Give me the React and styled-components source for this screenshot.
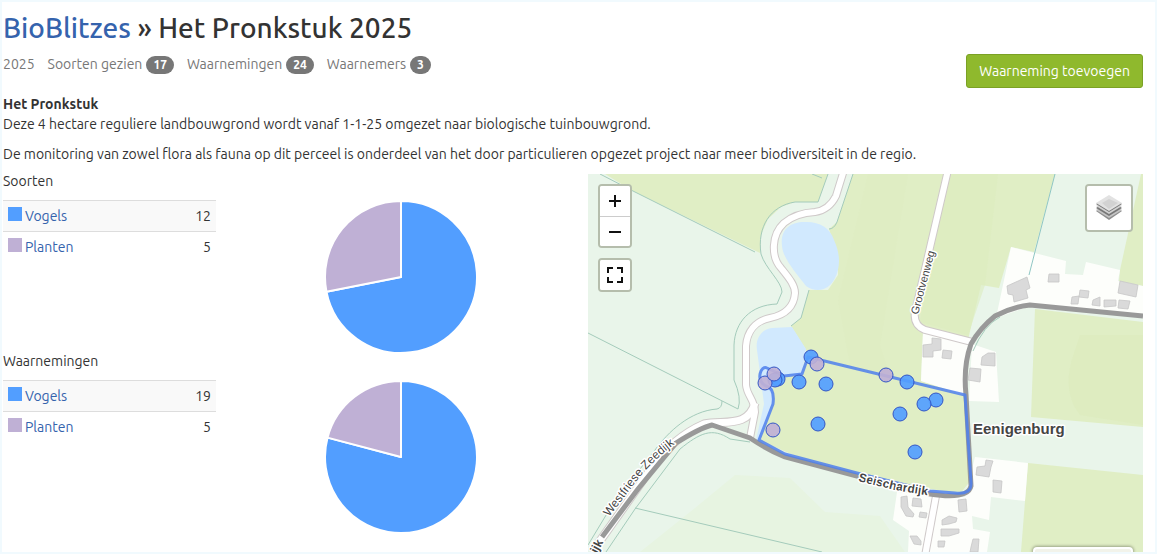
import React from "react";
import styled, { createGlobalStyle } from "styled-components";

const GlobalStyle = createGlobalStyle`
  *, *::before, *::after { box-sizing: border-box; }
  body {
    margin: 0;
    background: #f1fafe;
    color: #333;
    font-family: Ubuntu, "DejaVu Sans Condensed", sans-serif;
    font-size: 14px;
    line-height: 20px;
  }
`;

const Page = styled.main`
  margin: 2px;
  padding: 8px 12px 0 1px;
  background: #fff;
`;

const Title = styled.h1`
  margin: 0;
  padding-top: 2px;
  font-family: Ubuntu, "Noto Sans", sans-serif;
  font-size: 28px;
  font-weight: 500;
  line-height: 32px;
`;

const Link = styled.a`
  color: #3563ad;
  text-decoration: none;
  &:hover { text-decoration: underline; }
`;

const Bar = styled.div`
  display: flex;
  justify-content: space-between;
  align-items: flex-start;
  padding-top: 10px;
`;

const Stats = styled.ul`
  display: flex;
  gap: 13px;
  margin: 0;
  padding: 0;
  list-style: none;
  color: #777;
`;

const Badge = styled.span`
  display: inline-block;
  min-width: 10px;
  margin-left: 4px;
  padding: 3px 7px;
  border-radius: 10px;
  background: #777;
  color: #fff;
  font-size: 12px;
  font-weight: 700;
  line-height: 12px;
`;

const AddButton = styled.button`
  height: 34px;
  padding: 0 12px;
  border: 1px solid #7ba125;
  border-radius: 3px;
  background: #8fb92d;
  color: #fff;
  font: inherit;
  cursor: pointer;
`;

const Intro = styled.section`
  padding-top: 6px;
  p { margin: 0 0 10px; }
  p:last-child { margin: 0 0 7px; }
`;

const Columns = styled.div`
  display: grid;
  grid-template-columns: 1fr 1fr;
  gap: 30px;
  align-items: start;
`;

const Group = styled.section`
  display: grid;
  grid-template-columns: 213fr 314fr;
  gap: 28px;
  height: 180px;
`;

const GroupTitle = styled.h2`
  margin: 0 0 9px;
  font-size: 14px;
  font-weight: 400;
  line-height: 20px;
`;

const Table = styled.table`
  width: 100%;
  border-collapse: collapse;
  td {
    padding: 5px;
    height: 31px;
    border-top: 1px solid #ddd;
    vertical-align: top;
  }
  td:last-child { text-align: right; }
  tr:first-child { background: #f9f9f9; }
`;

const Swatch = styled.span`
  display: inline-block;
  width: 14px;
  height: 14px;
  margin-right: 3px;
  background: ${(p) => p.$color};
`;

const Pie = styled.svg`
  display: block;
  width: 156px;
  height: 156px;
  margin: 28px auto 0;
`;

const MapPanel = styled.section`
  position: relative;
  margin-top: 3px;
  overflow: hidden;
  font-family: "Liberation Sans", Arial, sans-serif;
`;

const MapDrawing = styled.svg`
  display: block;
  width: 100%;
  height: auto;
`;

const MapControls = styled.div`
  position: absolute;
  top: 10px;
  ${(p) => p.$side}: 10px;
  display: flex;
  flex-direction: column;
  gap: 10px;
`;

const ControlGroup = styled.div`
  border: 2px solid #b5bdac;
  border-radius: 4px;
  background: #fff;
  overflow: hidden;
`;

const MapButton = styled.button`
  display: flex;
  align-items: center;
  justify-content: center;
  width: ${(p) => p.$size}px;
  height: ${(p) => p.$size}px;
  padding: 0;
  border: 0;
  background: #fff;
  cursor: pointer;
  & + & { border-top: 1px solid #ccc; }
`;

const MapScale = styled.div`
  position: absolute;
  right: 10px;
  bottom: 0;
  width: 100px;
  height: 5px;
  border: 2px solid #fff;
  border-bottom: 0;
  border-radius: 4px 4px 0 0;
  background: #f2f3ea;
  box-shadow: 0 0 3px 1px #9aa385;
`;

const BLUE = "#529eff";
const PURPLE = "#bfb0d5";

const groups = [
  { title: "Soorten", split: 0.719, rows: [["Vogels", 12, BLUE], ["Planten", 5, PURPLE]] },
  { title: "Waarnemingen", split: 0.791, rows: [["Vogels", 19, BLUE], ["Planten", 5, PURPLE]] },
];

const stats = [["Soorten gezien", 17], ["Waarnemingen", 24], ["Waarnemers", 3]];

function PieChart({ split, label }) {
  const at = (t) => `${76 * Math.sin(2 * Math.PI * t)} ${-76 * Math.cos(2 * Math.PI * t)}`;
  const slices = [[0, split, BLUE], [split, 1, PURPLE]];
  return (
    <Pie viewBox="-78 -78 156 156" role="img" aria-label={label}>
      {slices.map(([from, to, color]) => (
        <path
          key={color}
          d={`M0 0L${at(from)}A76 76 0 ${to - from > 0.5 ? 1 : 0} 1 ${at(to)}Z`}
          fill={color}
          stroke="#fff"
          strokeWidth="2"
          strokeLinejoin="round"
        />
      ))}
    </Pie>
  );
}

const fields = [
  "M605 174L631 190L760 253L761 235L768 219L781 207L795 202L818 202L828 174Z",
  "M853 174L837 222L829 229L838 258L838 275L828 290L809 290L801 318L791 326L806 350L803 375L773 378L773 398L759 440L800 458L880 480L960 494L971 480L966 395L921 381L923 330L968 340L981 285L999 288L1011 247L1034 252L1055 174Z",
  "M1141 174L1120 270L1119 281L1143 286V174Z",
  "M1035 309L1143 322V427L1031 417Z",
  "M1028 463L1143 475V552H1021Z",
];

const plots = [
  "M1011 247L1066 261L1065 274L1083 275L1086 262L1120 270L1118 281L1143 286V318L1030 306L996 318Z",
  "M923 333L968 343L964 395L921 381Z",
  "M972 344L996 352L999 402L969 401Z",
  "M975 457L1028 463L1025 501L991 497L989 520L972 516L973 529L990 532L987 552H908L909 531L893 520L897 492L965 497Z",
];

const greenLines = [
  "M600 174L631 190L755 252",
  "M828 174L818 202H795C770 206 757 227 761 254C765 268 782 282 782 292L777 304C750 305 735 322 734 345",
  "M853 174L837 222Q834 229 829 229",
  "M809 290L801 318L791 326",
  "M588 333L738 409Q742 398 734 380V345",
  "M722 401Q722 408 717 409C690 411 668 432 655 450L614 502L588 545",
  "M606 552L635 509L680 449C700 433 712 427 730 439L750 442",
  "M635 508L822 552",
  "M812 174L822 178",
  "M973 351Q984 325 1000 317",
];

const buildings = [
  "M1007 286L1027 277L1030 288L1026 290L1028 298L1014 302L1013 295L1008 294Z",
  "M1049 274H1059V282H1048Z",
  "M1080 290L1089 291L1088 298L1079 297Z",
  "M1072 297L1079 296L1078 304H1071Z",
  "M1093 300L1100 297V306L1092 305Z",
  "M1104 300H1116V306L1104 307Z",
  "M1119 300L1130 301L1128 309L1118 308Z",
  "M1120 281L1138 285L1136 297L1118 293Z",
  "M923 345L932 344V338L941 339V350L933 351V357H923Z",
  "M943 350L952 351L951 359L942 358Z",
  "M982 357L988 353H995V366L981 365Z",
  "M970 368L981 369L980 382L968 380Z",
  "M977 467L985 466L986 460L993 461L991 467L989 477L976 475Z",
  "M993 480L1002 481L1001 493L993 492Z",
  "M958 500L966 499L967 511L959 512Z",
  "M901 497L907 496L908 507L914 514L913 517L906 516L901 507Z",
  "M913 498L921 499L922 507L912 506Z",
  "M920 512L927 513L926 518L919 517Z",
  "M942 520L949 516L957 518L956 522L949 524L942 525Z",
  "M941 529L959 529V533L949 536H941Z",
  "M910 536L917 536L921 541V545L914 544Z",
  "M938 541L945 541L944 547H938Z",
  "M973 539H979L978 552H970L971 547Z",
];

const mainRoad =
  "M602 537L638 489L676 443Q700 428 712 425L750 438Q768 450 785 457L857 476L930 494Q968 500 971 486L966 395Q963 366 971 344Q980 328 995 316Q1012 307 1030 305L1143 316";
const whiteRoads = [
  ["M844 170L836 196Q829 210 815 212Q796 213 784 223C771 235 771 257 781 268C789 278 795 285 795 293C794 307 785 315 770 318C755 321 747 332 746 346V385C747 396 755 400 755 412L750 438", 6],
  ["M592 552L612 524L650 470Q672 438 704 424C725 420 748 428 755 403", 7],
  ["M948 170L915 312Q913 325 925 330L972 342", 6],
  ["M936 496L925 556", 6],
];
const perimeter =
  "M808 357L965 395L971 482Q972 495 955 493L930 491L857 473L785 454L759 440L773 404Q775 388 766 386C755 380 761 365 767 368L784 376L802 374Z";

const sightings = [
  [811, 357, BLUE], [817, 364, PURPLE], [778, 379, BLUE], [775, 380, BLUE], [765, 383, PURPLE],
  [774, 374, PURPLE], [799, 382, BLUE], [826, 384, BLUE], [818, 424, BLUE], [773, 430, PURPLE],
  [886, 375, PURPLE], [907, 382, BLUE], [936, 400, BLUE], [924, 404, BLUE], [900, 414, BLUE], [915, 452, BLUE],
];

function MapArt() {
  const halo = { stroke: "#fff", strokeWidth: 3, strokeLinejoin: "round", paintOrder: "stroke", fill: "#444" };
  return (
    <MapDrawing viewBox="588 174 555 378" role="img" aria-label="Kaart van Het Pronkstuk">
      <defs>
        <path id="dike" d="M609 517L629 491Q650 460 690 433" />
        <path id="street" d="M858 481L895 490L950 499" />
      </defs>
      <rect x="588" y="174" width="555" height="378" fill="#e9f5ea" />
      <path d="M640 552L695 508L735 475L790 478L825 512L880 516L905 552Z" fill="#e7f4e1" />
      {fields.map((d) => <path key={d} d={d} fill="#e0eec5" />)}
      <path d="M868 174H908L880 345L890 375L850 365L838 300Z" fill="#ddecc0" opacity=".3" />
      <path d="M948 174H998L985 285L968 335L920 322Z" fill="#dcecbe" opacity=".6" />
      <path d="M1075 350Q1060 390 1080 415L1143 425V335H1080Z" fill="#dcebbd" opacity=".6" />
      {plots.map((d) => <path key={d} d={d} fill="#fdfefb" />)}
      {greenLines.map((d) => <path key={d} d={d} fill="none" stroke="#a4cbbb" />)}
      <path d="M1055 174L1029 275" stroke="#8fc6c4" />
      <path d="M782 246C780 230 790 222 804 222C818 221 830 227 834 240C841 255 840 268 835 278C829 291 816 293 806 286C797 274 783 259 782 246Z" fill="#d1e9fe" />
      <path d="M757 350C755 338 762 329 772 328L792 327L806 349L802 374L784 376L773 385L773 404L760 440L756 440L764 404Z" fill="#d1e9fe" />
      {buildings.map((d) => <path key={d} d={d} fill="#dadada" stroke="#c6c6c6" strokeWidth=".8" />)}
      {whiteRoads.map(([d, w]) => <path key={d} d={d} fill="none" stroke="#cfc9c9" strokeWidth={w + 2} />)}
      {whiteRoads.map(([d, w]) => <path key={d} d={d} fill="none" stroke="#fff" strokeWidth={w} />)}
      <path d={mainRoad} fill="none" stroke="#999" strokeWidth="5" />
      <path d={perimeter} fill="none" stroke="#4e7fec" strokeWidth="3" strokeOpacity=".85" strokeLinejoin="round" />
      <text fontSize="12" {...halo}><textPath href="#dike">Westfriese Zeedijk</textPath></text>
      <text fontSize="12" fontWeight="700" {...halo}><textPath href="#street">Seischardijk</textPath></text>
      <text fontSize="11" transform="translate(918 315)rotate(-75)" {...halo}>Grootvenweg</text>
      <text fontSize="12" fontWeight="700" transform="translate(597 554)rotate(-62)" {...halo}>ijk</text>
      <text x="973" y="434" fontSize="15" fontWeight="700" {...halo}>Eenigenburg</text>
      {sightings.map(([x, y, color]) => (
        <circle key={`${x}-${y}`} cx={x} cy={y} r="7" fill={color} fillOpacity=".92" stroke="#3355c5" strokeWidth="1" />
      ))}
    </MapDrawing>
  );
}

const Icon = ({ d }) => (
  <svg width="18" height="18" viewBox="0 0 18 18" fill="none" stroke="#111" strokeWidth="2" aria-hidden="true">
    <path d={d} />
  </svg>
);

const LayersIcon = () => (
  <svg width="28" height="28" viewBox="0 0 28 28" aria-hidden="true">
    <path d="M1 17L14 9L27 17L14 26Z" fill="#8e8e8e" />
    <path d="M1 16L14 8L27 16L14 24Z" fill="#c4c4c4" />
    <path d="M1 14L14 6L27 14L14 22Z" fill="#777" />
    <path d="M1 12L14 5L27 12L14 20Z" fill="#d2d2d2" />
    <path d="M1 10L14 2L27 10L14 18Z" fill="#777" />
    <path d="M1 9L14 1L27 9L14 17Z" fill="#e2e2e2" />
    <path d="M7 9L14 5L23 9L14 15Z" fill="#d2d2d2" />
  </svg>
);

export default function App() {
  return (
    <>
      <GlobalStyle />
      <Page>
        <Title><Link href="#bioblitzes">BioBlitzes</Link> » Het Pronkstuk 2025</Title>
        <Bar>
          <Stats>
            <li>2025</li>
            {stats.map(([name, count]) => <li key={name}>{name}<Badge>{count}</Badge></li>)}
          </Stats>
          <AddButton type="button">Waarneming toevoegen</AddButton>
        </Bar>
        <Intro>
          <p><strong>Het Pronkstuk</strong><br />Deze 4 hectare reguliere landbouwgrond wordt vanaf 1-1-25 omgezet naar biologische tuinbouwgrond.</p>
          <p>De monitoring van zowel flora als fauna op dit perceel is onderdeel van het door particulieren opgezet project naar meer biodiversiteit in de regio.</p>
        </Intro>
        <Columns>
          <div>
            {groups.map(({ title, split, rows }) => (
              <Group key={title}>
                <div>
                  <GroupTitle>{title}</GroupTitle>
                  <Table>
                    <tbody>
                      {rows.map(([name, count, color]) => (
                        <tr key={name}>
                          <td><Swatch $color={color} /><Link href={`#${name}`}>{name}</Link></td>
                          <td>{count}</td>
                        </tr>
                      ))}
                    </tbody>
                  </Table>
                </div>
                <PieChart split={split} label={title} />
              </Group>
            ))}
          </div>
          <MapPanel>
            <MapArt />
            <MapControls $side="left">
              <ControlGroup>
                <MapButton $size={30} type="button" aria-label="Zoom in"><Icon d="M9 3V15M3 9H15" /></MapButton>
                <MapButton $size={30} type="button" aria-label="Zoom uit"><Icon d="M3 9H15" /></MapButton>
              </ControlGroup>
              <ControlGroup>
                <MapButton $size={30} type="button" aria-label="Volledig scherm"><Icon d="M2 7V2H7M11 2H16V7M16 11V16H11M7 16H2V11" /></MapButton>
              </ControlGroup>
            </MapControls>
            <MapControls $side="right">
              <ControlGroup>
                <MapButton $size={44} type="button" aria-label="Kaartlagen"><LayersIcon /></MapButton>
              </ControlGroup>
            </MapControls>
            <MapScale />
          </MapPanel>
        </Columns>
      </Page>
    </>
  );
}
